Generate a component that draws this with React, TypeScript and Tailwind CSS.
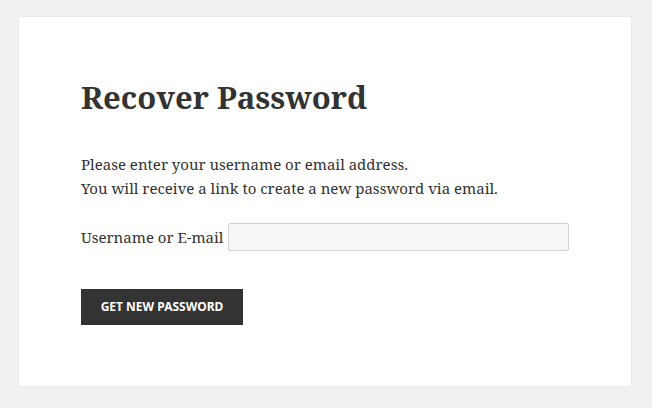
export default function App() {
  return (
    <div className="min-h-[408px] w-full bg-[#f1f1f1] pt-[17px] pb-[22px] pl-[19px] pr-[21px]">
      <div
        className="h-[369px] bg-white pl-[62px] pr-[62px] pt-[60px] shadow-[0_0_1px_rgba(0,0,0,0.15)] text-[#333333]"
        style={{ fontFamily: '"Noto Serif", "DejaVu Serif", serif' }}
      >
        <h1 className="text-[31px] font-bold leading-[40px]">Recover Password</h1>
        <p className="mt-[35px] text-[15px] leading-[24px]">
          Please enter your username or email address.
          <br />
          You will receive a link to create a new password via email.
        </p>
        <div className="mt-[23px] flex w-[488px] items-center gap-[4px] text-[15px] leading-[24px]">
          <label htmlFor="user_login" className="whitespace-nowrap">
            Username or E-mail
          </label>
          <input
            id="user_login"
            type="text"
            className="h-[28px] min-w-0 flex-1 rounded-[2px] border border-[#d1d1d1] bg-[#f7f7f7] px-2 outline-none"
          />
        </div>
        <button
          className="mt-[38px] h-[36px] w-[162px] bg-[#333333] text-[12px] font-bold uppercase text-white"
          style={{ fontFamily: '"Noto Sans", "Open Sans", sans-serif' }}
        >
          Get New Password
        </button>
      </div>
    </div>
  );
}
